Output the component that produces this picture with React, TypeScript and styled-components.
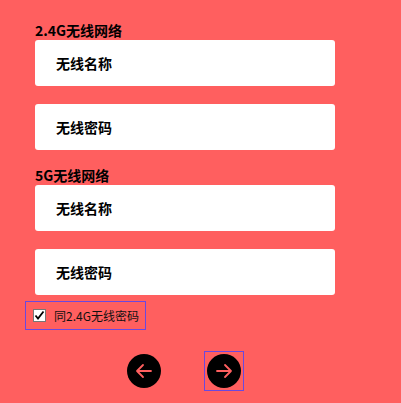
import { createGlobalStyle } from 'styled-components'
import styled from 'styled-components'

const GlobalStyle = createGlobalStyle`
  html, body {
    margin: 0;
    padding: 0;
    background: #ff5f5f;
  }
  body {
    font-family: "Noto Sans CJK SC", "Noto Sans", sans-serif;
    color: #000;
  }
`

const Page = styled.div`
  width: 401px;
  height: 403px;
  background: #ff5f5f;
  padding: 22px 0 0 35px;
  box-sizing: border-box;
  overflow: hidden;
`

const Group = styled.section`
  width: 300px;
  display: flex;
  flex-direction: column;
  gap: 18px;
`

const Heading = styled.h3`
  margin: 0 0 -17px;
  font-size: 14px;
  line-height: 17px;
  font-weight: 700;
`

const Field = styled.div`
  height: 46px;
  background: #fff;
  border-radius: 3px;
  display: flex;
  align-items: center;
  padding-left: 21px;
  font-size: 14px;
  font-weight: 700;
`

const Gap = styled.div`
  height: 17px;
`

const CheckRow = styled.div`
  margin: 7px 0 0 -9px;
  width: 119px;
  height: 27px;
  outline: 1px solid #6a48e0;
  display: flex;
  align-items: center;
  gap: 8px;
  padding-left: 7px;
  box-sizing: border-box;
  font-size: 12px;
  color: #111;
`

const Box = styled.span`
  width: 13px;
  height: 13px;
  background: #fff;
  border: 1px solid #777;
  box-sizing: border-box;
  display: flex;
  align-items: center;
  justify-content: center;
`

const Nav = styled.div`
  margin-top: 22px;
  padding-left: 92px;
  display: flex;
  align-items: center;
  gap: 43px;
`

const FocusRing = styled.span`
  display: flex;
  padding: 2px;
  border: 1px solid #6a48e0;
`

const Round = styled.button`
  width: 34px;
  height: 34px;
  border-radius: 50%;
  background: #000;
  border: none;
  padding: 0;
  display: flex;
  align-items: center;
  justify-content: center;
  outline: none;
`

function Arrow({ dir }: { dir: 'left' | 'right' }) {
  const d = dir === 'left' ? 'M19 12H5M11 6l-6 6 6 6' : 'M5 12h14M13 6l6 6-6 6'
  return (
    <svg width="24" height="24" viewBox="0 0 24 24" fill="none" stroke="#ff5f5f" strokeWidth="1.8" strokeLinecap="round" strokeLinejoin="round">
      <path d={d} />
    </svg>
  )
}

export default function App() {
  return (
    <Page>
      <GlobalStyle />
      <Group>
        <Heading>2.4G无线网络</Heading>
        <Field>无线名称</Field>
        <Field>无线密码</Field>
      </Group>
      <Gap />
      <Group>
        <Heading>5G无线网络</Heading>
        <Field>无线名称</Field>
        <Field>无线密码</Field>
      </Group>
      <CheckRow>
        <Box>
          <svg width="11" height="11" viewBox="0 0 11 11">
            <path d="M1.5 5.5l2.5 3 5.5-7" fill="none" stroke="#000" strokeWidth="1.8" />
          </svg>
        </Box>
        同2.4G无线密码
      </CheckRow>
      <Nav>
        <Round><Arrow dir="left" /></Round>
        <FocusRing>
          <Round><Arrow dir="right" /></Round>
        </FocusRing>
      </Nav>
    </Page>
  )
}
